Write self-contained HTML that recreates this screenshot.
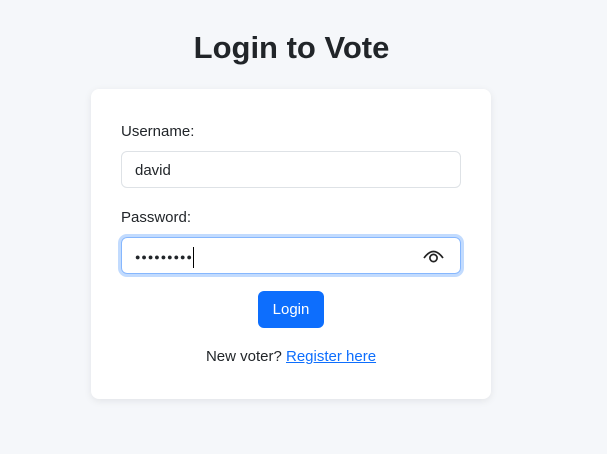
<!DOCTYPE html>
<html><head><style>
body{margin:0;width:607px;height:454px;background:#f5f7fa;font-family:"Liberation Sans",sans-serif;color:#212529;position:relative;overflow:hidden}
h1{position:absolute;top:29px;left:0;width:583px;text-align:center;margin:0;font-size:31px;font-weight:bold;line-height:38px}
.card{position:absolute;left:91px;top:89px;width:400px;height:310px;background:#fff;border-radius:8px;box-shadow:0 2px 8px rgba(0,0,0,.08)}
.lbl{position:absolute;left:30px;font-size:15px;margin-top:1px}
.in{position:absolute;left:30px;height:37px;border:1px solid #dee2e6;border-radius:6px;font-size:15px;line-height:38px;padding-left:13px;box-sizing:border-box;width:340px}
.focus{border-color:#86b7fe;box-shadow:0 0 0 3px #c2dbfe}
.btn{position:absolute;left:167px;top:202px;width:66px;height:37px;background:#0d6efd;color:#fff;border-radius:6px;font-size:15px;text-align:center;line-height:37px}
.reg{position:absolute;top:259px;left:0;width:400px;text-align:center;font-size:15px}
.reg a{color:#0d6efd;text-decoration:underline}
</style></head><body>
<h1>Login to Vote</h1>
<div class="card">
<div class="lbl" style="top:33px">Username:</div>
<div class="in" style="top:62px">david</div>
<div class="lbl" style="top:119px">Password:</div>
<div class="in focus" style="top:148px"><span style="font-size:9px;letter-spacing:1px;vertical-align:middle">●●●●●●●●●</span><span style="display:inline-block;width:1px;height:21px;background:#000;vertical-align:middle;margin-left:0"></span>
<svg style="position:absolute;right:16px;top:10px" width="21" height="16" viewBox="0 0 21 16"><path d="M1 10 Q10.5 -3 20 10" fill="none" stroke="#222" stroke-width="1.7"/><circle cx="10.5" cy="10" r="3.6" fill="none" stroke="#222" stroke-width="1.7"/></svg></div>
<div class="btn">Login</div>
<div class="reg">New voter? <a>Register here</a></div>
</div>
</body></html>
